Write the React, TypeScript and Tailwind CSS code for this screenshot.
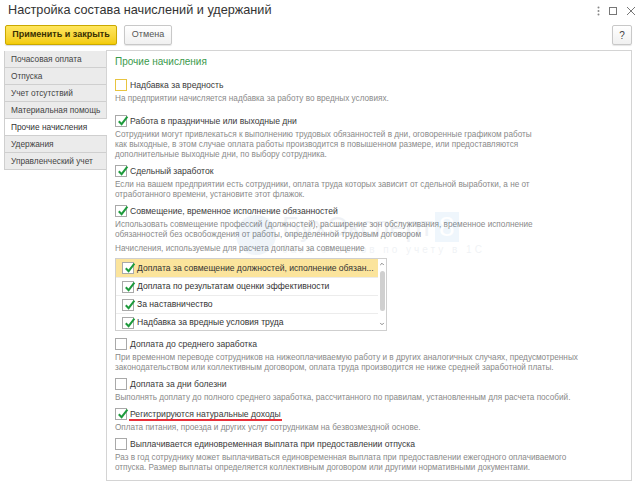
import { ChevronDown, ChevronUp } from 'lucide-react'

const tabs = [
  'Почасовая оплата',
  'Отпуска',
  'Учет отсутствий',
  'Материальная помощь',
  'Прочие начисления',
  'Удержания',
  'Управленческий учет',
]

const listRows = [
  'Доплата за совмещение должностей, исполнение обязан...',
  'Доплата по результатам оценки эффективности',
  'За наставничество',
  'Надбавка за вредные условия труда',
]

function Check({ checked, focused }: { checked?: boolean; focused?: boolean }) {
  return (
    <span
      className={
        'relative flex h-[12px] w-[12px] shrink-0 items-center justify-center border bg-white ' +
        (focused ? 'border-[#e8c440]' : 'border-[#a9a9a9]')
      }
    >
      {checked && (
        <svg viewBox="0 0 12 12" className="absolute left-[1px] top-[-1px] h-[12px] w-[12px]">
          <path d="M1.8 6.2 L4.6 9.2 L10.4 1.6" fill="none" stroke="#1d9a3c" strokeWidth="2" />
        </svg>
      )}
    </span>
  )
}

function Option({
  label,
  desc,
  checked,
  focused,
  underline,
  gap = 'mt-[4px]',
}: {
  label: string
  desc?: string[]
  checked?: boolean
  focused?: boolean
  underline?: boolean
  gap?: string
}) {
  return (
    <div className={gap}>
      <div className="flex h-[14px] items-center gap-[3px]">
        <Check checked={checked} focused={focused} />
        <span className="relative whitespace-nowrap text-[8.6px] text-[#3a3a3a]">
          {label}
          {underline && <span className="absolute left-[-1px] right-[-1px] top-[11px] h-[2px] bg-[#e8303a]" />}
        </span>
      </div>
      {desc && (
        <div className="mt-[2px] whitespace-nowrap text-[8.2px] leading-[10px] text-[#8a8a8a]">
          {desc.map((d) => (
            <div key={d}>{d}</div>
          ))}
        </div>
      )}
    </div>
  )
}

export default function App() {
  return (
    <div className="relative h-[483px] w-[640px] overflow-hidden bg-white font-['Liberation_Sans',Arial,sans-serif] text-[#333]">
      {/* title bar */}
      <div className="flex h-[22px] items-center justify-between pl-[8px] pr-[4px]">
        <div className="text-[12.7px] text-[#333]">Настройка состава начислений и удержаний</div>
        <div className="flex items-center gap-[9px] text-[#777]">
          <svg width="3" height="10" viewBox="0 0 3 10">
            <circle cx="1.5" cy="1.5" r="1" fill="#888" />
            <circle cx="1.5" cy="5" r="1" fill="#888" />
            <circle cx="1.5" cy="8.5" r="1" fill="#888" />
          </svg>
          <span className="h-[8px] w-[8px] border border-[#777]" />
          <svg width="10" height="10" viewBox="0 0 10 10">
            <path d="M1 1 L9 9 M9 1 L1 9" stroke="#777" strokeWidth="1" />
          </svg>
        </div>
      </div>

      {/* toolbar */}
      <div className="mt-[3px] flex h-[20px] items-center pl-[5px] pr-[8px]">
        <button className="flex h-[20px] w-[112px] items-center justify-center rounded-[2px] border border-[#caa800] bg-gradient-to-b from-[#ffe65c] to-[#f3cb00] text-[9px] font-bold text-[#3a3000] shadow-[0_1px_1px_rgba(0,0,0,0.15)]">
          Применить и закрыть
        </button>
        <button className="ml-[7px] flex h-[20px] w-[48px] items-center justify-center rounded-[2px] border border-[#c8c8c8] bg-gradient-to-b from-white to-[#f0f0f0] text-[9px] text-[#555] shadow-[0_1px_1px_rgba(0,0,0,0.1)]">
          Отмена
        </button>
        <div className="flex-1" />
        <button className="flex h-[20px] w-[20px] items-center justify-center rounded-[2px] border border-[#c8c8c8] bg-gradient-to-b from-white to-[#f0f0f0] text-[10px] text-[#444] shadow-[0_1px_1px_rgba(0,0,0,0.1)]">
          ?
        </button>
      </div>

      {/* body */}
      <div className="mt-[5px] flex h-[431px] pl-[4px] pr-[8px]">
        <div className="w-[102px] shrink-0 pt-[1px]">
          {tabs.map((t) => {
            const active = t === 'Прочие начисления'
            return (
              <div
                key={t}
                className={
                  'relative flex h-[17px] items-center whitespace-nowrap border-b border-l border-[#cfcfcf] pl-[6px] text-[8.3px] ' +
                  (active ? 'z-10 mr-[-1px] bg-white text-[#333]' : 'bg-[#ebebeb] text-[#444]')
                }
              >
                {t}
              </div>
            )
          })}
        </div>

        <div className="flex-1 border border-[#d4d4d4] bg-white pl-[8px] pr-[10px] pt-[3px]">
          <div className="text-[10px] leading-[16px] text-[#3a9a4c]">Прочие начисления</div>

          <Option
            gap="mt-[8px]"
            focused
            label="Надбавка за вредность"
            desc={['На предприятии начисляется надбавка за работу во вредных условиях.']}
          />
          <Option
            gap="mt-[10px]"
            checked
            label="Работа в праздничные или выходные дни"
            desc={[
              'Сотрудники могут привлекаться к выполнению трудовых обязанностей в дни, оговоренные графиком работы',
              'как выходные, в этом случае оплата работы производится в повышенном размере, или предоставляются',
              'дополнительные выходные дни, по выбору сотрудника.',
            ]}
          />
          <Option
            checked
            label="Сдельный заработок"
            desc={[
              'Если на вашем предприятии есть сотрудники, оплата труда которых зависит от сдельной выработки, а не от',
              'отработанного времени, установите этот флажок.',
            ]}
          />
          <Option
            checked
            label="Совмещение, временное исполнение обязанностей"
            desc={[
              'Использовать совмещение профессий (должностей), расширение зон обслуживания, временное исполнение',
              'обязанностей без освобождения от работы, определенной трудовым договором',
            ]}
          />

          <div className="mt-[4px] whitespace-nowrap text-[8.2px] leading-[10px] text-[#8a8a8a]">
            Начисления, используемые для расчета доплаты за совмещение
          </div>
          <div className="mt-[4px] flex h-[73px] w-[272px] border border-[#cfcfcf]">
            <div className="min-w-0 flex-1">
              {listRows.map((r, i) => (
                <div
                  key={r}
                  className={
                    'flex h-[18px] items-center gap-[3px] overflow-hidden whitespace-nowrap pl-[6px] text-[8.6px] text-[#333] ' +
                    (i === 0 ? 'bg-[#fbe49c]' : 'border-t border-[#ececec]')
                  }
                >
                  <Check checked />
                  <span>{r}</span>
                </div>
              ))}
            </div>
            <div className="flex w-[8px] flex-col items-center pt-[2px]">
              <ChevronUp size={6} strokeWidth={4} className="text-[#888]" />
              <div className="mt-[4px] h-[40px] w-[5px] rounded-full bg-[#d0d0d0]" />
              <div className="flex-1" />
              <ChevronDown size={6} strokeWidth={4} className="mb-[3px] text-[#888]" />
            </div>
          </div>

          <Option
            gap="mt-[6px]"
            label="Доплата до среднего заработка"
            desc={[
              'При временном переводе сотрудников на нижеоплачиваемую работу и в других аналогичных случаях, предусмотренных',
              'законодательством или коллективным договором, оплата труда производится не ниже средней заработной платы.',
            ]}
          />
          <Option
            label="Доплата за дни болезни"
            desc={['Выполнять доплату до полного среднего заработка, рассчитанного по правилам, установленным для расчета пособий.']}
          />
          <Option
            checked
            underline
            label="Регистрируются натуральные доходы"
            desc={['Оплата питания, проезда и других услуг сотрудникам на безвозмездной основе.']}
          />
          <Option
            label="Выплачивается единовременная выплата при предоставлении отпуска"
            desc={[
              'Раз в год сотруднику может выплачиваться единовременная выплата при предоставлении ежегодного оплачиваемого',
              'отпуска. Размер выплаты определяется коллективным договором или другими нормативными документами.',
            ]}
          />
        </div>
      </div>

      {/* watermark */}
      <div className="pointer-events-none absolute left-[236px] top-[212px] flex items-center gap-[6px] opacity-[0.07]">
        <div className="h-[40px] w-[40px] rounded-full bg-[#2a6fb5]" />
        <div>
          <div className="flex items-end text-[28px] leading-[30px] text-[#2a4f7a]">
            БухЭксперт<span className="ml-[2px] bg-[#2a8ee0] px-[4px] text-white">8</span>
          </div>
          <div className="text-[10px] tracking-[3px] text-[#2a4f7a]">база ответов по учету в 1С</div>
        </div>
      </div>
    </div>
  )
}
